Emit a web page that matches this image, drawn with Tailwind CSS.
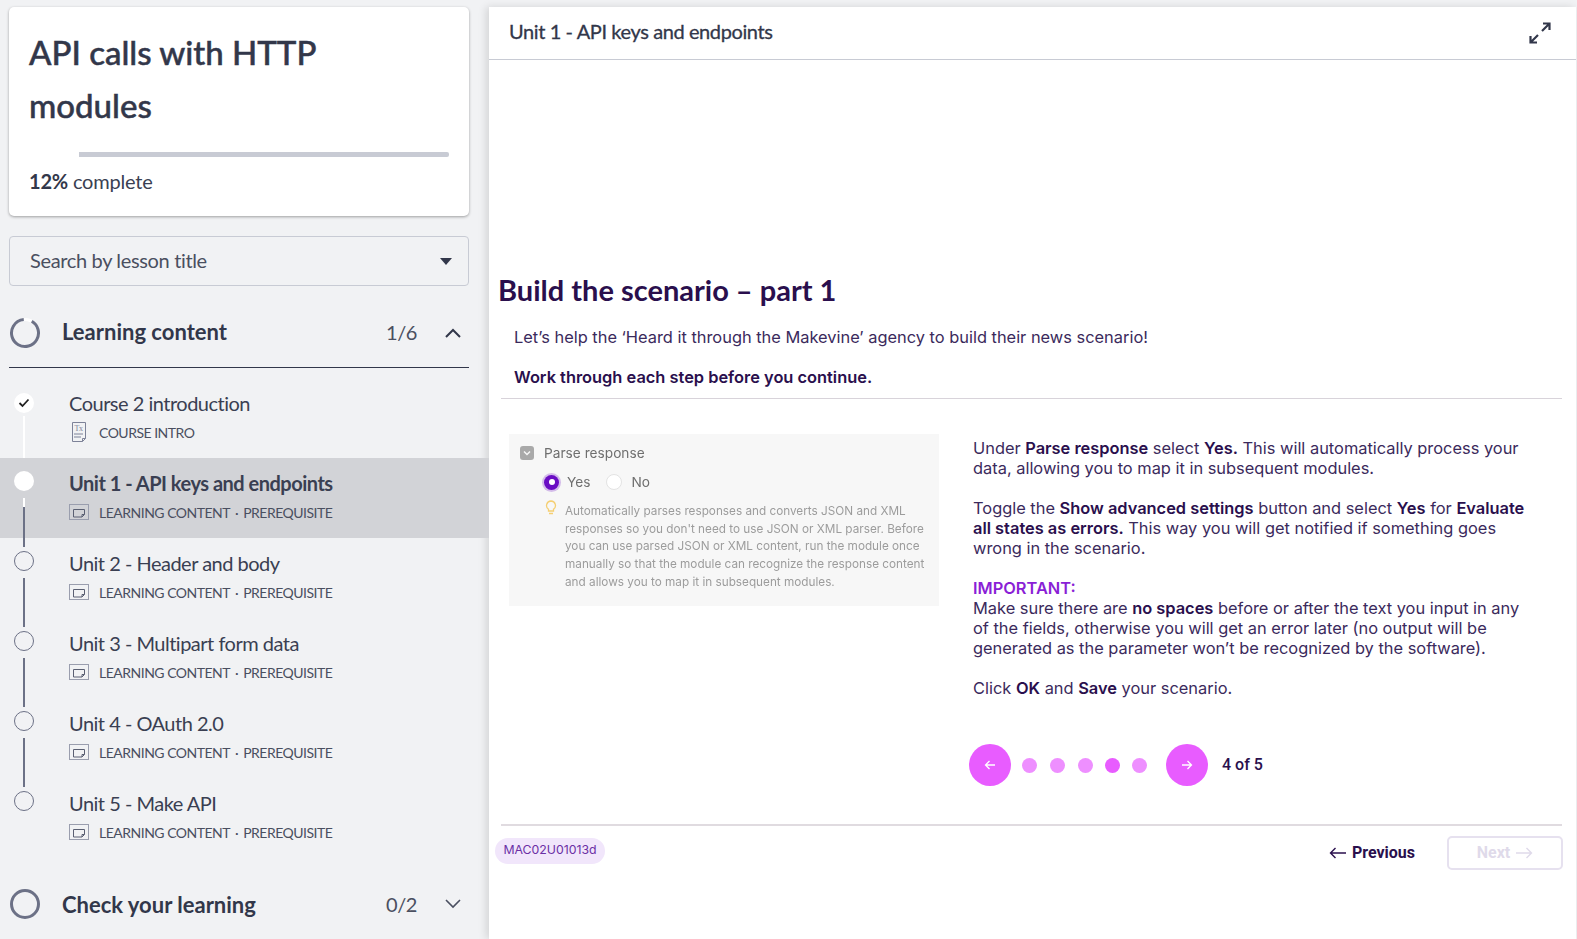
<!DOCTYPE html>
<html lang="en">
<head>
    <meta charset="UTF-8">
    <title>API calls with HTTP modules</title>
    <script src="https://cdn.jsdelivr.net/npm/@tailwindcss/browser@4"></script>
</head>
<body class="bg-[#f1f2f4] overflow-hidden">
<div class="flex w-[1577px] h-[939px] overflow-hidden">

    <!-- sidebar -->
    <aside class="w-[489px] shrink-0 font-['Lato',sans-serif] text-[#3a3f52] overflow-hidden">
        <div class="ml-[9px] mt-[7px] w-[460px] h-[209px] bg-white rounded-[5px] shadow-[0_1px_3px_rgba(0,0,0,0.35)] px-[20px] pt-[19px]">
            <h1 class="text-[33px] leading-[53px] font-medium text-[#32374a] [-webkit-text-stroke:0.5px_#32374a]">API calls with HTTP<br>modules</h1>
            <div class="mt-[20px] h-[5px] ml-[50px] bg-[#c8cbd4] rounded-r-[2px]"></div>
            <p class="mt-[10px] text-[20px] leading-[28px] tracking-[-0.2px]"><span class="font-bold text-[#32374a]">12%</span> complete</p>
        </div>

        <div class="ml-[9px] mt-[20px] w-[460px] h-[50px] border border-[#c8cbd4] rounded-[4px] flex items-center justify-between pl-[20px] pr-[16px] pb-[2px] text-[20px] tracking-[-0.35px] text-[#4a4f60]">
            <span>Search by lesson title</span>
            <span class="mt-[2px] w-0 h-0 border-x-[6px] border-x-transparent border-t-[7px] border-t-[#32374a]"></span>
        </div>

        <div class="ml-[9px] mt-[22px] w-[460px] h-[60px] border-b border-[#32374a] flex items-center pb-[10px]">
            <svg width="32" height="32" viewBox="0 0 32 32" class="shrink-0"><circle cx="16" cy="16" r="13.500" fill="none" stroke="#fff" stroke-width="3"/><circle cx="16" cy="16" r="13.500" fill="none" stroke="#6c7186" stroke-width="3" stroke-dasharray="76 9" transform="rotate(-60 16 16)"/></svg>
            <span class="ml-[21px] -mt-[2px] text-[22px] font-bold text-[#32374a]">Learning content</span>
            <span class="ml-auto -mt-[1px] text-[20px] tracking-[-0.4px] text-[#4a4f60]">1/6</span>
            <svg width="18" height="12" viewBox="0 0 18 12" class="ml-[27px] mr-[7px]"><path d="M2 10l7-7 7 7" fill="none" stroke="#32374a" stroke-width="2"/></svg>
        </div>

        <div class="mt-[10px] tracking-[-0.5px]">
            <div class="relative h-[80px] pl-[69px] pt-[10px]">
                <div class="absolute left-[14px] top-[15px] w-[20px] h-[20px] rounded-full bg-white flex items-center justify-center">
                    <svg width="12" height="10" viewBox="0 0 12 10"><path d="M1.500 5l3 3 6-6.500" fill="none" stroke="#222" stroke-width="1.800"/></svg>
                </div>
                <div class="absolute left-[23px] top-[38px] w-[2px] h-[49px] bg-white"></div>
                <p class="text-[20px] leading-[30px]">Course 2 introduction</p>
                <div class="flex items-center mt-[2px] h-[24px] text-[14px] text-[#4a4f60]">
                    <svg width="20" height="22" viewBox="0 0 20 22" class="shrink-0"><path d="M3.500 1.500h13v16l-3 3h-10z" fill="none" stroke="#7d8298" stroke-width="1"/><path d="M13.500 20.500v-3h3" fill="none" stroke="#7d8298"/><text x="5.500" y="10" font-size="8" fill="#7d8298" font-family="Liberation Serif">Tx</text><path d="M5 13h9M5 16h7" stroke="#7d8298"/></svg>
                    <span class="ml-[10px]">COURSE INTRO</span>
                </div>
            </div>

            <div class="relative h-[80px] pl-[69px] pt-[10px] bg-[#d2d3d7]">
                <div class="absolute left-[14px] top-[13px] w-[20px] h-[20px] rounded-full bg-white"></div>
                <div class="absolute left-[23px] top-[40px] w-[2px] h-[9px] bg-white"></div>
                <div class="absolute left-[23px] top-[49px] w-[2px] h-[40px] bg-[#6c7186]"></div>
                <p class="text-[20px] leading-[30px] font-bold text-[#3a3f52]">Unit 1 - API keys and endpoints</p>
                <div class="flex items-center mt-[2px] h-[24px] text-[14px] text-[#4a4f60]">
                    <svg width="20" height="16" viewBox="0 0 20 16" class="shrink-0"><rect x="0.500" y="0.500" width="19" height="15" fill="none" stroke="#9a9eae"/><path d="M4.500 5.500h11v5l-2.500 2.500h-8.500z" fill="none" stroke="#5a5f72"/><path d="M13 13v-2.500h2.500" fill="none" stroke="#5a5f72"/></svg>
                    <span class="ml-[10px]">LEARNING CONTENT<span class="mx-[5px]">·</span>PREREQUISITE</span>
                </div>
            </div>

            <div class="relative h-[80px] pl-[69px] pt-[10px]">
                <div class="absolute left-[14px] top-[13px] w-[20px] h-[20px] rounded-full border border-[#6c7186]"></div>
                <div class="absolute left-[23px] top-[40px] w-[2px] h-[49px] bg-[#6c7186]"></div>
                <p class="text-[20px] leading-[30px]">Unit 2 - Header and body</p>
                <div class="flex items-center mt-[2px] h-[24px] text-[14px] text-[#4a4f60]">
                    <svg width="20" height="16" viewBox="0 0 20 16" class="shrink-0"><rect x="0.500" y="0.500" width="19" height="15" fill="none" stroke="#9a9eae"/><path d="M4.500 5.500h11v5l-2.500 2.500h-8.500z" fill="none" stroke="#5a5f72"/><path d="M13 13v-2.500h2.500" fill="none" stroke="#5a5f72"/></svg>
                    <span class="ml-[10px]">LEARNING CONTENT<span class="mx-[5px]">·</span>PREREQUISITE</span>
                </div>
            </div>

            <div class="relative h-[80px] pl-[69px] pt-[10px]">
                <div class="absolute left-[14px] top-[13px] w-[20px] h-[20px] rounded-full border border-[#6c7186]"></div>
                <div class="absolute left-[23px] top-[40px] w-[2px] h-[49px] bg-[#6c7186]"></div>
                <p class="text-[20px] leading-[30px]">Unit 3 - Multipart form data</p>
                <div class="flex items-center mt-[2px] h-[24px] text-[14px] text-[#4a4f60]">
                    <svg width="20" height="16" viewBox="0 0 20 16" class="shrink-0"><rect x="0.500" y="0.500" width="19" height="15" fill="none" stroke="#9a9eae"/><path d="M4.500 5.500h11v5l-2.500 2.500h-8.500z" fill="none" stroke="#5a5f72"/><path d="M13 13v-2.500h2.500" fill="none" stroke="#5a5f72"/></svg>
                    <span class="ml-[10px]">LEARNING CONTENT<span class="mx-[5px]">·</span>PREREQUISITE</span>
                </div>
            </div>

            <div class="relative h-[80px] pl-[69px] pt-[10px]">
                <div class="absolute left-[14px] top-[13px] w-[20px] h-[20px] rounded-full border border-[#6c7186]"></div>
                <div class="absolute left-[23px] top-[40px] w-[2px] h-[49px] bg-[#6c7186]"></div>
                <p class="text-[20px] leading-[30px]">Unit 4 - OAuth 2.0</p>
                <div class="flex items-center mt-[2px] h-[24px] text-[14px] text-[#4a4f60]">
                    <svg width="20" height="16" viewBox="0 0 20 16" class="shrink-0"><rect x="0.500" y="0.500" width="19" height="15" fill="none" stroke="#9a9eae"/><path d="M4.500 5.500h11v5l-2.500 2.500h-8.500z" fill="none" stroke="#5a5f72"/><path d="M13 13v-2.500h2.500" fill="none" stroke="#5a5f72"/></svg>
                    <span class="ml-[10px]">LEARNING CONTENT<span class="mx-[5px]">·</span>PREREQUISITE</span>
                </div>
            </div>

            <div class="relative h-[80px] pl-[69px] pt-[10px]">
                <div class="absolute left-[14px] top-[13px] w-[20px] h-[20px] rounded-full border border-[#6c7186]"></div>
                <p class="text-[20px] leading-[30px]">Unit 5 - Make API</p>
                <div class="flex items-center mt-[2px] h-[24px] text-[14px] text-[#4a4f60]">
                    <svg width="20" height="16" viewBox="0 0 20 16" class="shrink-0"><rect x="0.500" y="0.500" width="19" height="15" fill="none" stroke="#9a9eae"/><path d="M4.500 5.500h11v5l-2.500 2.500h-8.500z" fill="none" stroke="#5a5f72"/><path d="M13 13v-2.500h2.500" fill="none" stroke="#5a5f72"/></svg>
                    <span class="ml-[10px]">LEARNING CONTENT<span class="mx-[5px]">·</span>PREREQUISITE</span>
                </div>
            </div>
        </div>

        <div class="ml-[9px] mt-[16px] w-[460px] h-[60px] flex items-center">
            <svg width="32" height="32" viewBox="0 0 32 32" class="shrink-0"><circle cx="16" cy="16" r="13.500" fill="none" stroke="#6c7186" stroke-width="3"/></svg>
            <span class="ml-[21px] text-[22px] font-bold text-[#32374a]">Check your learning</span>
            <span class="ml-auto text-[20px] tracking-[-0.4px] text-[#4a4f60]">0/2</span>
            <svg width="18" height="12" viewBox="0 0 18 12" class="ml-[27px] mr-[7px]"><path d="M2 2l7 7 7-7" fill="none" stroke="#4a4f60" stroke-width="1.600"/></svg>
        </div>
    </aside>

    <!-- lesson -->
    <main class="flex-1 mt-[7px] bg-white shadow-[-3px_0_8px_rgba(0,0,0,0.12)] mr-[1px] text-[#3b2a5c] font-['Inter',sans-serif]">
        <header class="h-[53px] border-b border-[#c8cbd4] flex items-center justify-between pl-[20px] pr-[25px] font-['Lato',sans-serif] text-[20px] tracking-[-0.4px] text-[#32374a]">
            <span class="-mt-[5px] [-webkit-text-stroke:0.3px_#32374a]">Unit 1 - API keys and endpoints</span>
            <svg width="22" height="22" viewBox="0 0 22 22"><path d="M13 9l7-7M14 1.500h6.500v6.500M9 13l-7 7M8 20.500H1.500V14" fill="none" stroke="#32374a" stroke-width="2.200"/></svg>
        </header>

        <h2 class="mt-[212px] ml-[9px] text-[29px] leading-[36px] font-bold font-['Lato',sans-serif] text-[#2a0f4d]">Build the scenario – part 1</h2>
        <p class="mt-[17px] ml-[25px] text-[16.400px] leading-[24px]">Let’s help the ‘Heard it through the Makevine’ agency to build their news scenario!</p>
        <p class="mt-[16px] ml-[25px] text-[16.400px] leading-[24px] font-semibold text-[#2a0f4d]">Work through each step before you continue.</p>
        <div class="mt-[9px] ml-[12px] w-[1061px] h-[1px] bg-[#d8d3da]"></div>

        <div class="flex mt-[35px] ml-[20px]">
            <div class="w-[430px] h-[172px] bg-[#f7f7f7] shrink-0 text-[#6f6f6f] blur-[0.3px]">
                <div class="flex items-center pt-[9px] pl-[11px] text-[13.700px] leading-[20px]">
                    <span class="w-[14px] h-[14px] rounded-[3px] bg-[#a9a9a9] flex items-center justify-center"><svg width="8" height="6" viewBox="0 0 8 6"><path d="M1 1.500l3 3 3-3" fill="none" stroke="#f7f7f7" stroke-width="1.500"/></svg></span>
                    <span class="ml-[10px]">Parse response</span>
                </div>
                <div class="flex items-center mt-[9px] pl-[35px] text-[13.700px] leading-[20px]">
                    <span class="w-[15px] h-[15px] rounded-full bg-[#6a0dc4] ring-[2px] ring-[#6a0dc4]/25 flex items-center justify-center"><span class="w-[6px] h-[6px] rounded-full bg-white"></span></span>
                    <span class="ml-[8px]">Yes</span>
                    <span class="ml-[16px] w-[16px] h-[16px] rounded-full bg-white border border-[#e3e3e3]"></span>
                    <span class="ml-[9px]">No</span>
                </div>
                <div class="flex mt-[11px] pl-[36px]">
                    <svg width="12" height="16" viewBox="0 0 12 16" class="shrink-0 -mt-[3px]"><path d="M6 1a4.500 4.500 0 0 0-2.500 8.200V11h5V9.200A4.500 4.500 0 0 0 6 1zM4 13.500h4" fill="none" stroke="#f5cf73" stroke-width="1.300"/></svg>
                    <p class="ml-[8px] text-[11.750px] leading-[17.700px] text-[#9c9c9c] w-[372px]">Automatically parses responses and converts JSON and XML responses so you don't need to use JSON or XML parser. Before you can use parsed JSON or XML content, run the module once manually so that the module can recognize the response content and allows you to map it in subsequent modules.</p>
                </div>
            </div>

            <div class="ml-[34px] w-[560px] text-[16.400px] leading-[20px]">
                <p class="mt-[4px]">Under <b class="font-semibold text-[#2a0f4d]">Parse response</b> select <b class="font-semibold text-[#2a0f4d]">Yes.</b> This will automatically process your data, allowing you to map it in subsequent modules.</p>
                <p class="mt-[20px]">Toggle the <b class="font-semibold text-[#2a0f4d]">Show advanced settings</b> button and select <b class="font-semibold text-[#2a0f4d]">Yes</b> for <b class="font-semibold text-[#2a0f4d]">Evaluate all states as errors.</b> This way you will get notified if something goes wrong in the scenario.</p>
                <p class="mt-[20px] font-semibold text-[#8a1fd6]">IMPORTANT:</p>
                <p>Make sure there are <b class="font-semibold text-[#2a0f4d]">no spaces</b> before or after the text you input in any of the fields, otherwise you will get an error later (no output will be generated as the parameter won’t be recognized by the software).</p>
                <p class="mt-[20px]">Click <b class="font-semibold text-[#2a0f4d]">OK</b> and <b class="font-semibold text-[#2a0f4d]">Save</b> your scenario.</p>

                <div class="flex items-center mt-[46px] -ml-[4px]">
                    <button class="w-[42px] h-[42px] rounded-full bg-[#e85cff] flex items-center justify-center"><svg width="12" height="12" viewBox="0 0 12 12"><path d="M11 6H1.500M5.500 2L1.500 6l4 4" fill="none" stroke="#fff" stroke-width="1.300"/></svg></button>
                    <span class="ml-[11px] w-[15px] h-[15px] rounded-full bg-[#ee8fff]"></span>
                    <span class="ml-[13px] w-[15px] h-[15px] rounded-full bg-[#ee8fff]"></span>
                    <span class="ml-[13px] w-[15px] h-[15px] rounded-full bg-[#ee8fff]"></span>
                    <span class="ml-[12px] w-[15px] h-[15px] rounded-full bg-[#e85cff]"></span>
                    <span class="ml-[12px] w-[15px] h-[15px] rounded-full bg-[#ee8fff]"></span>
                    <button class="ml-[19px] w-[42px] h-[42px] rounded-full bg-[#e85cff] flex items-center justify-center"><svg width="12" height="12" viewBox="0 0 12 12"><path d="M1 6h9.500M6.500 2l4 4-4 4" fill="none" stroke="#fff" stroke-width="1.300"/></svg></button>
                    <span class="ml-[14px] text-[16px] font-medium font-['Roboto',sans-serif] text-[#2a0f4d]">4 of 5</span>
                </div>
            </div>
        </div>

        <div class="mt-[38px] ml-[12px] w-[1061px] h-[2px] bg-[#e0dbe0]"></div>

        <div class="flex items-center mt-[9px] ml-[6px] mr-[13px] h-[35px]">
            <span class="-mt-[4px] h-[26px] w-[110px] rounded-full bg-[#f1e6fb] flex items-center justify-center text-[12.300px] text-[#6b2fa5]">MAC02U01013d</span>
            <span class="ml-auto flex items-center gap-[5px] text-[16px] font-bold font-['Roboto',sans-serif] text-[#2a0f4d]">
                <svg width="18" height="12" viewBox="0 0 18 12"><path d="M17 6H1.500M6.500 1L1.500 6l5 5" fill="none" stroke="#2a0f4d" stroke-width="1.400"/></svg>
                Previous
            </span>
            <span class="ml-[32px] w-[116px] h-[34px] rounded-[5px] border-2 border-[#e6e1ef] flex items-center justify-center gap-[5px] text-[16px] font-bold font-['Roboto',sans-serif] text-[#dfdaea]">
                Next
                <svg width="18" height="12" viewBox="0 0 18 12"><path d="M1 6h15.500M11.500 1l5 5-5 5" fill="none" stroke="#dfdaea" stroke-width="1.400"/></svg>
            </span>
        </div>
    </main>
</div>
</body>
</html>
